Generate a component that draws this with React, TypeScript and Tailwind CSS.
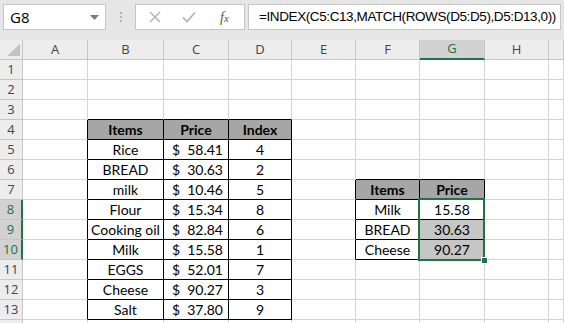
import React from "react";

type Cell = { t?: string; bold?: boolean; fill?: string; price?: string };

const colLabels = ["A", "B", "C", "D", "E", "F", "G", "H", ""];

const t1: [string, string, string][] = [
  ["Rice", "58.41", "4"],
  ["BREAD", "30.63", "2"],
  ["milk", "10.46", "5"],
  ["Flour", "15.34", "8"],
  ["Cooking oil", "82.84", "6"],
  ["Milk", "15.58", "1"],
  ["EGGS", "52.01", "7"],
  ["Cheese", "90.27", "3"],
  ["Salt", "37.80", "9"],
];

const t2: [string, string][] = [
  ["Milk", "15.58"],
  ["BREAD", "30.63"],
  ["Cheese", "90.27"],
];

function inTable(r: number, c: number) {
  if (r >= 4 && r <= 13 && c >= 1 && c <= 3) return true;
  if (r >= 7 && r <= 10 && c >= 5 && c <= 6) return true;
  return false;
}

function getCell(r: number, c: number): Cell {
  if (r === 4 && c >= 1 && c <= 3) return { t: ["Items", "Price", "Index"][c - 1], bold: true, fill: "hdr" };
  if (r >= 5 && r <= 13 && c >= 1 && c <= 3) {
    const row = t1[r - 5];
    if (c === 1) return { t: row[0] };
    if (c === 2) return { price: row[1] };
    return { t: row[2] };
  }
  if (r === 7 && (c === 5 || c === 6)) return { t: c === 5 ? "Items" : "Price", bold: true, fill: "hdr" };
  if (r >= 8 && r <= 10 && (c === 5 || c === 6)) {
    const row = t2[r - 8];
    if (c === 5) return { t: row[0] };
    return { t: row[1], fill: r === 8 ? undefined : "sel" };
  }
  return {};
}

const gridCols = "grid grid-cols-[23px_65px_76px_65px_63px_64px_64px_65px_64px_1fr]";

function CellView({ r, c }: { r: number; c: number }) {
  const cell = getCell(r, c);
  const blackR = inTable(r, c) || inTable(r, c + 1);
  const blackB = inTable(r, c) || inTable(r + 1, c);
  const bg =
    cell.fill === "hdr" ? "bg-[#a6a6a6]" : cell.fill === "sel" ? "bg-[#c6c6c6]" : "bg-white";
  return (
    <div
      className={`h-[20px] border-r border-b ${blackR ? "border-r-black" : "border-r-[#d4d4d4]"} ${
        blackB ? "border-b-black" : "border-b-[#d4d4d4]"
      } ${bg} flex items-center text-[14px] leading-none text-black ${cell.bold ? "font-bold" : ""}`}
    >
      {cell.price ? (
        <div className="flex w-full justify-between pl-[8px] pr-[5px]">
          <span>$</span>
          <span>{cell.price}</span>
        </div>
      ) : cell.t ? (
        <div className="w-full text-center">{cell.t}</div>
      ) : null}
    </div>
  );
}

export default function App() {
  const rows = Array.from({ length: 14 }, (_, i) => i + 1);
  return (
    <div className="w-[564px] h-[323px] overflow-hidden bg-white relative" style={{ fontFamily: "Lato, sans-serif" }}>
      {/* toolbar */}
      <div className="h-[40px] bg-[#e6e6e6] flex items-start pt-[4px] pl-[3px]">
        <div className="w-[103px] h-[26px] bg-white border border-[#c6c6c6] flex items-center justify-between pl-[6px] pr-[6px]">
          <span className="text-[15px] text-black" style={{ fontFamily: "'Open Sans', sans-serif" }}>G8</span>
          <svg width="9" height="5" viewBox="0 0 9 5"><path d="M0 0h9L4.5 5z" fill="#7a7a7a" /></svg>
        </div>
        <div className="w-[29px] h-[26px] flex flex-col items-center justify-center gap-[2px]">
          <div className="w-[2px] h-[2px] bg-[#b4b4b4]" />
          <div className="w-[2px] h-[2px] bg-[#b4b4b4]" />
          <div className="w-[2px] h-[2px] bg-[#b4b4b4]" />
        </div>
        <div className="w-[110px] h-[26px] bg-white border border-[#c6c6c6] flex items-center">
          <svg className="ml-[13px]" width="12" height="12" viewBox="0 0 12 12">
            <path d="M1 1L11 11M11 1L1 11" stroke="#b0b0b0" strokeWidth="1.4" />
          </svg>
          <svg className="ml-[21px]" width="14" height="12" viewBox="0 0 14 12">
            <path d="M1 6.5L5 10.5L13 1.5" stroke="#b0b0b0" strokeWidth="1.6" fill="none" />
          </svg>
          <span
            className="ml-[24px] text-[14px] italic text-[#555]"
            style={{ fontFamily: "'Liberation Serif', serif" }}
          >
            f<span className="text-[11px]">x</span>
          </span>
        </div>
        <div className="ml-[3px] w-[313px] h-[26px] bg-white border border-[#c6c6c6] flex items-center pl-[10px]">
          <span
            className="text-[13.5px] tracking-[-0.4px] text-black whitespace-nowrap"
            style={{ fontFamily: "'Liberation Sans', sans-serif" }}
          >
            =INDEX(C5:C13,MATCH(ROWS(D5:D5),D5:D13,0))
          </span>
        </div>
      </div>

      {/* column headers */}
      <div className={`${gridCols} h-[20px]`} style={{ fontFamily: "'Open Sans', sans-serif" }}>
        <div className="h-[20px] bg-[#ededed] border-r border-b border-[#c6c6c6] relative">
          <svg className="absolute left-[7px] top-[4px]" width="13" height="12" viewBox="0 0 13 12">
            <path d="M13 0V12H0z" fill="#c2c2c2" />
          </svg>
        </div>
        {colLabels.map((l, i) =>
          l === "G" ? (
            <div
              key={i}
              className="h-[20px] bg-[#d2d2d2] border-r border-r-[#c6c6c6] border-b-2 border-b-[#217346] flex items-center justify-center text-[13px] text-[#217346]"
            >
              {l}
            </div>
          ) : (
            <div
              key={i}
              className="h-[20px] bg-[#ededed] border-r border-b border-[#c6c6c6] flex items-center justify-center text-[13px] text-[#444]"
            >
              {l}
            </div>
          )
        )}
      </div>

      {/* rows */}
      {rows.map((r) => (
        <div key={r} className={gridCols}>
          {r >= 8 && r <= 10 ? (
            <div
              className="h-[20px] bg-[#d2d2d2] border-r-2 border-r-[#217346] border-b border-b-[#c6c6c6] flex items-center justify-center text-[13px] text-[#217346]"
              style={{ fontFamily: "'Open Sans', sans-serif" }}
            >
              {r}
            </div>
          ) : (
            <div
              className="h-[20px] bg-[#ededed] border-r border-b border-[#c6c6c6] flex items-center justify-center text-[13px] text-[#444]"
              style={{ fontFamily: "'Open Sans', sans-serif" }}
            >
              {r}
            </div>
          )}
          {Array.from({ length: 9 }, (_, c) => (
            <CellView key={c} r={r} c={c} />
          ))}
        </div>
      ))}

      {/* selection overlay */}
      <div className="absolute left-[418px] top-[198px] w-[67px] h-[63px] border-2 border-[#217346] pointer-events-none" />
      <div className="absolute left-[481px] top-[257px] w-[7px] h-[7px] bg-[#217346] border border-white pointer-events-none" />
    </div>
  );
}
